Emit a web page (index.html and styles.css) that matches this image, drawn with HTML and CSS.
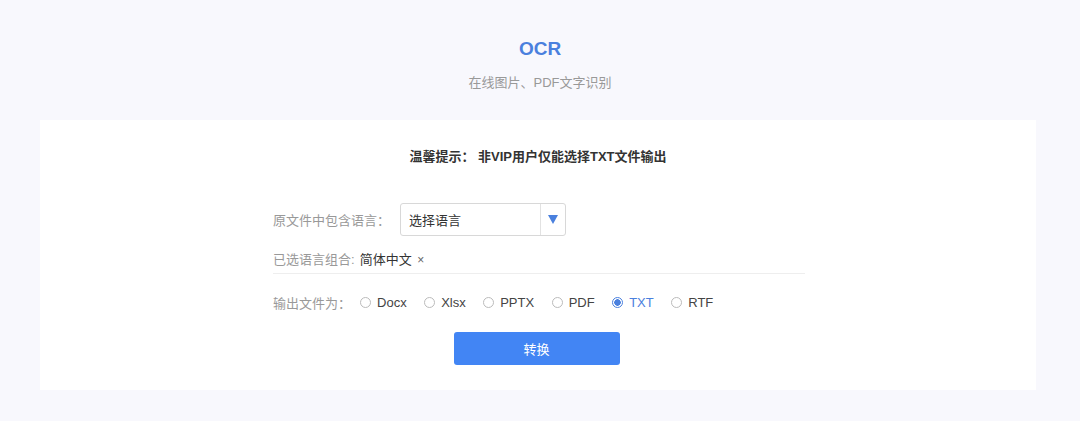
FILE: index.html
```html
<!DOCTYPE html>
<html lang="zh-CN">
<head>
    <meta charset="UTF-8">
    <title>OCR</title>
    <link rel="stylesheet" href="styles.css">
</head>
<body>
    <header>
        <h1>OCR</h1>
        <p class="subtitle">在线图片、PDF文字识别</p>
    </header>

    <div class="card">
        <p class="tip">温馨提示： 非VIP用户仅能选择TXT文件输出</p>

        <div class="form">
            <div class="row">
                <span class="label">原文件中包含语言：</span>
                <div class="select">
                    <span class="select-text">选择语言</span>
                    <span class="select-arrow"></span>
                </div>
            </div>

            <div class="row chosen">
                <span class="label">已选语言组合:</span>
                <span class="tag">简体中文 <span class="close">×</span></span>
            </div>

            <div class="row formats">
                <span class="label">输出文件为：</span>
                <label class="radio"><span class="dot"></span>Docx</label>
                <label class="radio"><span class="dot"></span>Xlsx</label>
                <label class="radio"><span class="dot"></span>PPTX</label>
                <label class="radio"><span class="dot"></span>PDF</label>
                <label class="radio checked"><span class="dot"></span>TXT</label>
                <label class="radio"><span class="dot"></span>RTF</label>
            </div>
        </div>

        <div class="actions">
            <button>转换</button>
        </div>
    </div>
</body>
</html>
```

FILE: styles.css
```css
body {
    margin: 0;
    padding: 0;
    background-color: #f8f8fd;
    font-family: "Liberation Sans", "Noto Sans CJK SC", Arial, sans-serif;
    font-size: 13px;
    color: #333;
}
header {
    text-align: center;
    padding-top: 38px;
    height: 82px;
}
header h1 {
    margin: 0;
    font-size: 19px;
    line-height: 22px;
    color: #4a80de;
    font-weight: bold;
}
.subtitle {
    margin: 14px 0 0;
    font-size: 13px;
    line-height: 18px;
    color: #999;
}
.card {
    background: #ffffff;
    margin: 0 44px 0 40px;
    height: 270px;
    padding-top: 28px;
    box-sizing: border-box;
}
.tip {
    margin: 0;
    text-align: center;
    font-weight: bold;
    font-size: 13px;
    line-height: 18px;
    color: #333;
}
.form {
    width: 532px;
    margin: 37px auto 0;
    padding-left: 2px;
}
.row {
    display: flex;
    align-items: center;
}
.label {
    color: #999;
    font-size: 13px;
}
.select {
    margin-left: 10px;
    width: 164px;
    height: 31px;
    border: 1px solid #d8d8d8;
    border-radius: 3px;
    display: flex;
    align-items: center;
}
.select-text {
    flex: 1;
    padding-left: 8px;
    color: #333;
}
.select-arrow {
    width: 24px;
    height: 31px;
    border-left: 1px solid #e2e2e2;
    display: flex;
    align-items: center;
    justify-content: center;
}
.select-arrow::after {
    content: "";
    border-left: 5px solid transparent;
    border-right: 5px solid transparent;
    border-top: 9px solid #4a80de;
}
.chosen {
    margin-top: 8px;
    border-bottom: 1px solid #eeeeee;
    align-items: flex-start;
    padding-top: 5px;
    box-sizing: border-box;
    height: 30px;
}
.tag {
    margin-left: 5px;
    color: #333;
}
.close {
    color: #666;
    font-size: 12px;
    margin-left: 2px;
}
.formats {
    margin-top: 19px;
}
.formats .label {
    margin-right: 9px;
}
.radio {
    display: flex;
    align-items: center;
    color: #444;
    margin-right: 17.5px;
    font-size: 13px;
}
.dot {
    width: 9px;
    height: 9px;
    border: 1px solid #bbb;
    border-radius: 50%;
    margin-right: 6px;
    box-sizing: content-box;
    display: inline-block;
}
.radio.checked {
    color: #4a80de;
}
.radio.checked .dot {
    border-color: #4a80de;
    background: radial-gradient(circle, #4a80de 0 3px, #fff 3.5px);
}
.actions {
    text-align: center;
    margin-top: 20px;
    padding-right: 3px;
}
button {
    width: 166px;
    height: 33px;
    background: #4285f4;
    color: #ffffff;
    border: none;
    border-radius: 3px;
    font-family: inherit;
    font-size: 13px;
    cursor: pointer;
}
```
